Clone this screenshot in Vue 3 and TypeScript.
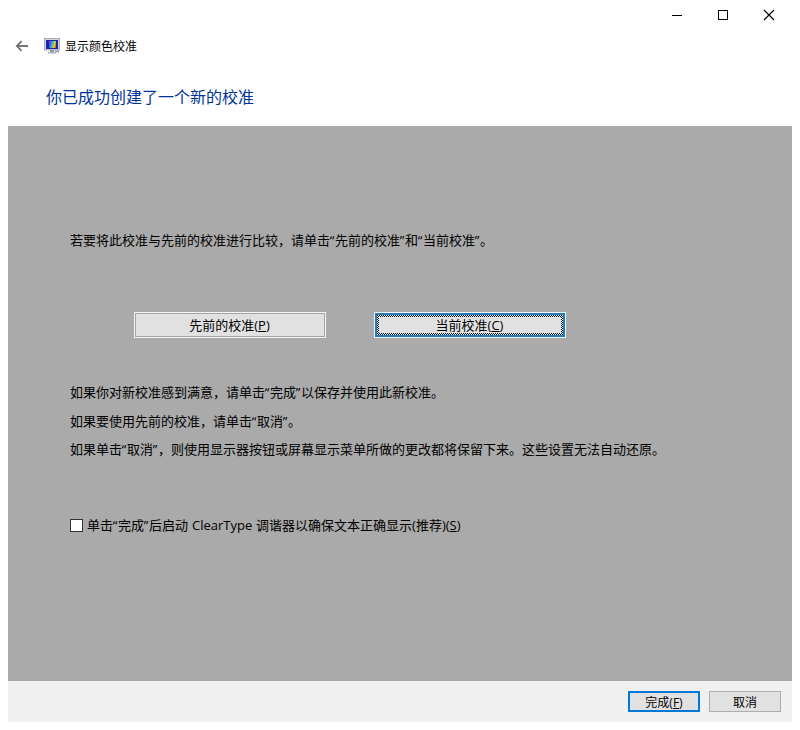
<script setup lang="ts">
interface Run {
  text: string
  kind?: 'quote'
}

const split = (line: string): Run[] =>
  line
    .split(/([“”])/)
    .filter((part) => part.length > 0)
    .map((part) => (/[“”]/.test(part) ? { text: part, kind: 'quote' } : { text: part }))

const compareLine = split('若要将此校准与先前的校准进行比较，请单击“先前的校准”和“当前校准”。')
const notes: Run[][] = [
  '如果你对新校准感到满意，请单击“完成”以保存并使用此新校准。',
  '如果要使用先前的校准，请单击“取消”。',
  '如果单击“取消”，则使用显示器按钮或屏幕显示菜单所做的更改都将保留下来。这些设置无法自动还原。',
].map(split)
const checkLead = split('单击“完成”后启动')
</script>

<template>
  <main class="window">
    <div class="caption">
      <svg class="cap" width="12" height="12" viewBox="0 0 12 12" shape-rendering="crispEdges"><rect x="1" y="6" width="10" height="1" fill="#000" /></svg>
      <svg class="cap" width="12" height="12" viewBox="0 0 12 12" shape-rendering="crispEdges"><rect x="1.5" y="1.5" width="9" height="9" fill="none" stroke="#000" /></svg>
      <svg class="cap" width="12" height="12" viewBox="0 0 12 12"><path d="M1 1L11 11M11 1L1 11" stroke="#000" stroke-width="1.2" /></svg>
    </div>
    <header class="title">
      <svg class="back" width="14" height="12" viewBox="0 0 14 12"><path d="M13 6H2M6.6 1.2L1.8 6L6.6 10.8" fill="none" stroke="#747474" stroke-width="1.8" /></svg>
      <svg class="monitor" width="16" height="16" viewBox="0 0 16 16">
        <defs>
          <linearGradient id="spectrum" x1="0" y1="0" x2="1" y2="0.25">
            <stop offset="0" stop-color="#d838e8" />
            <stop offset=".28" stop-color="#4a48f0" />
            <stop offset=".5" stop-color="#20c8e0" />
            <stop offset=".68" stop-color="#40dc40" />
            <stop offset=".85" stop-color="#f4ea28" />
            <stop offset="1" stop-color="#f06030" />
          </linearGradient>
        </defs>
        <rect x=".5" y=".5" width="15" height="11.5" fill="#d4d8de" stroke="#a4a9b3" />
        <rect x="2" y="2" width="12" height="9" fill="#1c22a8" />
        <rect x="5" y="3" width="7" height="7" fill="url(#spectrum)" />
        <path d="M6 12h4v2H6z" fill="#9299a3" />
        <path d="M4 14h8v1.5H4z" fill="#b1b6be" />
        <path d="M11 12h4v2.5h-4z" fill="#a6acb5" />
      </svg>
      <span>显示颜色校准</span>
    </header>
    <h1>你已成功创建了一个新的校准</h1>

    <section class="panel">
      <p class="line compare"><span v-for="(r, i) in compareLine" :key="i" :class="r.kind">{{ r.text }}</span></p>
      <div class="choices">
        <button class="choice">先前的校准<span class="key">(<u>P</u>)</span></button>
        <button class="choice active">
          <svg class="focus" width="186" height="20" viewBox="0 0 186 20" shape-rendering="crispEdges">
            <defs>
              <pattern id="dots" width="2" height="2" patternUnits="userSpaceOnUse">
                <path d="M0 0h2v2H0z" fill="#dcebf5" />
                <path d="M0 0h1v1H0zM1 1h1v1H1z" fill="#0c1a26" />
              </pattern>
            </defs>
            <path d="M0 0H186V20H0ZM2 2V18H184V2Z" fill="url(#dots)" fill-rule="evenodd" />
          </svg>
          当前校准<span class="key">(<u>C</u>)</span>
        </button>
      </div>
      <div class="notes">
        <p v-for="(note, n) in notes" :key="n" class="line"><span v-for="(r, i) in note" :key="i" :class="r.kind">{{ r.text }}</span></p>
      </div>
      <label class="check line">
        <span class="box"></span>
        <span><span v-for="(r, i) in checkLead" :key="i" :class="r.kind">{{ r.text }}</span></span>
        <span class="latin">ClearType</span>
        <span>调谐器以确保文本正确显示<span class="key">(</span>推荐<span class="key">)(<u>S</u>)</span></span>
      </label>
    </section>

    <footer class="actions">
      <button class="action primary">完成<span class="key">(<u>F</u>)</span></button>
      <button class="action">取消</button>
    </footer>
  </main>
</template>

<style>
body { margin: 0; background: #fff; }
</style>

<style scoped>
.window {
  box-sizing: border-box;
  width: 800px;
  height: 730px;
  padding: 0 8px 8px;
  display: flex;
  flex-direction: column;
  background: #fff;
  color: #000;
  font: 13px/20px "Noto Sans CJK SC", sans-serif;
  white-space: nowrap;
  overflow: hidden;
}
.caption { height: 30px; box-sizing: border-box; padding: 9px 17px 0 0; display: flex; justify-content: flex-end; gap: 34px; }
.cap { display: block; }
.title { height: 32px; display: flex; align-items: center; font-size: 12px; padding-left: 7px; }
.back { margin-right: 15px; }
.monitor { margin-right: 5px; }
h1 { margin: 0; height: 64px; padding: 22px 0 0 38px; box-sizing: border-box; font-size: 16px; line-height: 24px; font-weight: 400; color: #003399; }
.panel { height: 555px; box-sizing: border-box; background: #aaa; padding: 104px 62px 0; }
.line { margin: 0; height: 20px; line-height: 20px; }
.quote { display: inline-block; width: 5px; font-family: "Open Sans", sans-serif; line-height: 18px; text-indent: -0.3px; }
.choices { display: flex; gap: 48px; padding: 62px 0 0 64px; }
button { font-family: inherit; color: inherit; margin: 0; padding: 0; box-sizing: border-box; border-radius: 0; }
.choice { position: relative; width: 192px; height: 26px; padding-right: 1px; font-size: 13px; line-height: 20px; background: #e1e1e1; border: 1px solid #f6f6f6; box-shadow: inset 0 0 0 1px #a3a3a3; }
.choice.active { border-color: #e8f6ff; box-shadow: inset 0 0 0 3px #2a78b4; }
.focus { position: absolute; left: 2px; top: 2px; }
.key { font-family: "Open Sans", sans-serif; line-height: 18px; }
u { text-decoration: underline; text-underline-offset: 1px; text-decoration-thickness: 1px; text-decoration-skip-ink: none; }
.notes { padding-top: 44px; display: flex; flex-direction: column; gap: 8.5px; }
.check { margin-top: 56px; display: flex; align-items: center; }
.box { width: 13px; height: 13px; box-sizing: border-box; border: 1px solid #333; background: #fff; margin-right: 4px; }
.latin { width: 60px; margin: 0 4px; font-family: "Open Sans", sans-serif; }
.actions { height: 41px; box-sizing: border-box; background: #f0f0f0; display: flex; justify-content: flex-end; align-items: flex-start; gap: 9px; padding: 10px 11px 0 0; }
.action { width: 72px; height: 21px; font-size: 12px; line-height: 17px; background: #e1e1e1; border: 1px solid #adadad; }
.action.primary { border: 2px solid #0078d7; }
</style>
